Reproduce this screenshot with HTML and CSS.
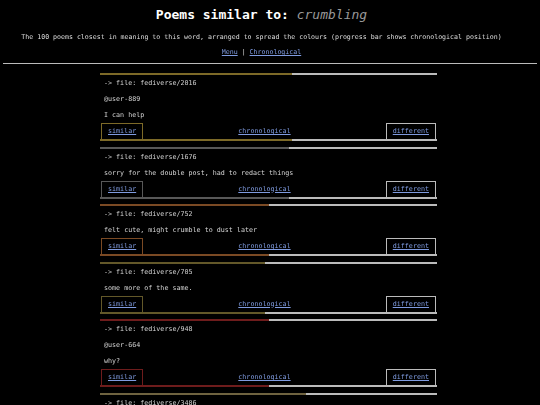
FILE: index.html
```html
<!DOCTYPE html>
<html lang="en">

<head>
    <meta charset="UTF-8">
    <meta name="viewport" content="width=device-width, initial-scale=1.0">
    <title>Poems similar to: crumbling</title>
    <link rel="stylesheet" href="styles.css">
</head>

<body>
    <header class="top">
        <h1>Poems similar to: <em>crumbling</em></h1>
        <p class="intro">The 100 poems closest in meaning to this word, arranged to spread the colours (progress bar shows chronological position)</p>
        <nav class="nav"><a href="#">Menu</a> | <a href="#">Chronological</a></nav>
    </header>
    <hr class="rule">

    <main class="poems">
        <!-- each poem: progress bar, file name, text, then the navigation row -->
        <article class="poem c-gold">
            <div class="bar"><span style="width:57%"></span></div>
            <p class="file">-&gt; file: fediverse/2016</p>
            <p>@user-889</p>
            <p>I can help</p>
            <div class="links">
                <a class="box similar" href="#">similar</a>
                <a href="#">chronological</a>
                <a class="box different" href="#">different</a>
            </div>
            <div class="bar"><span style="width:57%"></span></div>
        </article>

        <article class="poem c-gray">
            <div class="bar"><span style="width:56%"></span></div>
            <p class="file">-&gt; file: fediverse/1676</p>
            <p>sorry for the double post, had to redact things</p>
            <div class="links">
                <a class="box similar" href="#">similar</a>
                <a href="#">chronological</a>
                <a class="box different" href="#">different</a>
            </div>
            <div class="bar"><span style="width:56%"></span></div>
        </article>

        <article class="poem c-brown">
            <div class="bar"><span style="width:50%"></span></div>
            <p class="file">-&gt; file: fediverse/752</p>
            <p>felt cute, might crumble to dust later</p>
            <div class="links">
                <a class="box similar" href="#">similar</a>
                <a href="#">chronological</a>
                <a class="box different" href="#">different</a>
            </div>
            <div class="bar"><span style="width:50%"></span></div>
        </article>

        <article class="poem c-olive">
            <div class="bar"><span style="width:49%"></span></div>
            <p class="file">-&gt; file: fediverse/705</p>
            <p>some more of the same.</p>
            <div class="links">
                <a class="box similar" href="#">similar</a>
                <a href="#">chronological</a>
                <a class="box different" href="#">different</a>
            </div>
            <div class="bar"><span style="width:49%"></span></div>
        </article>

        <article class="poem c-red">
            <div class="bar"><span style="width:50%"></span></div>
            <p class="file">-&gt; file: fediverse/948</p>
            <p>@user-664</p>
            <p>why?</p>
            <div class="links">
                <a class="box similar" href="#">similar</a>
                <a href="#">chronological</a>
                <a class="box different" href="#">different</a>
            </div>
            <div class="bar"><span style="width:50%"></span></div>
        </article>

        <article class="poem c-sand">
            <div class="bar"><span style="width:61%"></span></div>
            <p class="file">-&gt; file: fediverse/3486</p>
        </article>
    </main>
</body>

</html>
```

FILE: styles.css
```css
/* page */
body {
    margin: 0;
    background-color: #000;
    color: #ddd;
    font-family: "DejaVu Sans Mono", monospace;
}

a {
    color: #7f9be0;
}

/* header */
.top {
    padding-right: 17px;
    text-align: center;
}

h1 {
    margin: 7px 0 0;
    font-size: 13px;
    line-height: 16px;
    color: #fff;
}

h1 em {
    font-weight: normal;
    color: #999;
}

.intro {
    margin: 9px 0 0;
    font-size: 6.6px;
    line-height: 10px;
    color: #ddd;
    /* grey antialiasing for the tiny text */
    will-change: transform;
}

.nav {
    margin-top: 5px;
    font-size: 6.6px;
    line-height: 10px;
    will-change: transform;
}

.rule {
    margin: 6px 3px 0;
    height: 0;
    border: none;
    border-top: 1px solid #bbb;
}

/* poem list */
.poems {
    width: 337px;
    margin: 9px auto 0;
    padding-right: 3px;
    will-change: transform;
}

.poem {
    margin-bottom: 5.5px;
    font-size: 6.7px;
    line-height: 16px;
    color: #d4d4d4;
}

.poem p {
    margin: 0;
    padding: 0 4px;
    white-space: pre-wrap;
}

/* progress bar: coloured part is the chronological position */
.bar {
    height: 2px;
    background-color: #bbb;
}

.bar span {
    display: block;
    height: 100%;
    background-color: var(--tone);
}

.links {
    display: flex;
    justify-content: space-between;
    align-items: center;
    height: 16px;
    padding: 0 1px;
}

.box {
    height: 15px;
    line-height: 15px;
    padding: 0 6px;
    border: 1px solid;
    border-bottom: none;
}

.similar {
    border-color: var(--tone);
}

.different {
    border-color: #bbb;
}

/* poem colours */
.c-gold { --tone: #7d6a28; }
.c-gray { --tone: #585858; }
.c-brown { --tone: #7b4a24; }
.c-olive { --tone: #635829; }
.c-red { --tone: #6e1c1c; }
.c-sand { --tone: #6f6340; }
```
